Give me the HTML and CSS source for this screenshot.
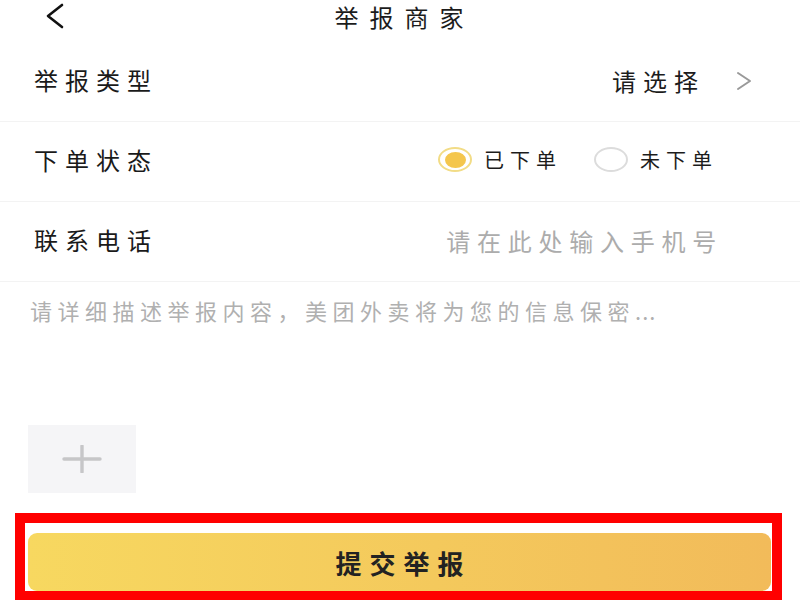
FILE: index.html
```html
<!DOCTYPE html>
<html lang="zh-CN">
<head>
<meta charset="utf-8">
<title>举报商家</title>
<link rel="stylesheet" href="styles.css">
</head>
<body>
<div class="page">
  <header class="header">
    <span class="back">
      <svg width="20" height="26" viewBox="0 0 20 26"><polyline points="17,2 3,13 17,24" fill="none" stroke="#111" stroke-width="2.6" stroke-linecap="round" stroke-linejoin="round"/></svg>
    </span>
    <h1 class="title">举报商家</h1>
  </header>

  <div class="row">
    <span class="label">举报类型</span>
    <span class="select">
      <span class="select-text">请选择</span>
      <svg class="chev" width="16" height="20" viewBox="0 0 16 20"><polyline points="2,2 14,10 2,18" fill="none" stroke="#999" stroke-width="2" stroke-linecap="round" stroke-linejoin="round"/></svg>
    </span>
  </div>

  <div class="row">
    <span class="label">下单状态</span>
    <span class="radios">
      <span class="radio">
        <span class="dot dot-on"><span class="dot-inner"></span></span>
        <span class="radio-text">已下单</span>
      </span>
      <span class="radio">
        <span class="dot dot-off"></span>
        <span class="radio-text">未下单</span>
      </span>
    </span>
  </div>

  <div class="row">
    <span class="label">联系电话</span>
    <span class="phone">请在此处输入手机号</span>
  </div>

  <div class="desc">
    <p class="desc-text">请详细描述举报内容，美团外卖将为您的信息保密<span class="dots">...</span></p>
    <div class="upload">
      <svg width="40" height="28" viewBox="0 0 40 28"><path d="M2 14H38M20 1V27" stroke="#c6c6c8" stroke-width="3.4" stroke-linecap="round"/></svg>
    </div>
  </div>

  <div class="submit-wrap">
    <div class="submit">提交举报</div>
  </div>
</div>
</body>
</html>
```

FILE: styles.css
```css
* { box-sizing: border-box; }
html, body { margin: 0; padding: 0; background: #fff; }
body {
  font-family: "Noto Sans CJK SC", "Noto Sans", sans-serif;
  color: #1c1c1c;
  overflow: hidden;
  height: 600px;
}
.page { width: 800px; }

.header {
  height: 42px;
  display: flex;
  align-items: flex-start;
  padding-left: 45px;
}
.back { display: flex; padding-top: 3px; }
.title {
  margin: 0;
  flex: 1;
  text-align: center;
  font-size: 24px;
  font-weight: 400;
  line-height: 34px;
  letter-spacing: 11px;
  padding-right: 56px;
}

.row {
  height: 80px;
  border-bottom: 1px solid #f3f3f3;
  display: flex;
  align-items: center;
  justify-content: space-between;
  padding: 0 48px 0 34px;
}
.label {
  font-size: 24px;
  letter-spacing: 7px;
  line-height: 30px;
  margin-top: -3px;
  color: #1a1a1a;
}
.select { display: flex; align-items: center; margin-top: -2px; }
.select-text { font-size: 24px; letter-spacing: 7px; margin-right: 31px; }
.chev { display: block; }

.radios { display: flex; align-items: center; margin-right: 34px; margin-top: -4px; }
.radio { display: flex; align-items: center; }
.radio + .radio { margin-left: 32px; }
.dot {
  width: 34px;
  height: 25px;
  border-radius: 50%;
  display: flex;
  align-items: center;
  justify-content: center;
}
.dot-on { border: 2px solid #f2dc86; }
.dot-inner { width: 21px; height: 16px; border-radius: 50%; background: #f4c64d; }
.dot-off { border: 2px solid #dcdcdc; }
.radio-text { font-size: 20px; letter-spacing: 6px; margin-left: 12px; }

.phone { font-size: 24px; color: #acacac; letter-spacing: 6.75px; margin-right: 29px; margin-top: -2px; }

.desc { padding: 14px 0 0 28px; }
.desc-text {
  margin: 0 0 0 2px;
  font-size: 22px;
  line-height: 28px;
  color: #b0b0b0;
  letter-spacing: 5.5px;
}
.dots { letter-spacing: 1px; }
.upload {
  margin-top: 101px;
  width: 108px;
  height: 68px;
  background: #f5f5f7;
  display: flex;
  align-items: center;
  justify-content: center;
}

.submit-wrap {
  margin: 20px 0 0 15px;
  width: 767px;
  border: 10px solid #ff0000;
  padding: 10px 1px 0 3px;
}
.submit {
  height: 58px;
  border-radius: 9px;
  background: linear-gradient(90deg, #f7d860 0%, #f4c95c 55%, #f2bb5a 100%);
  display: flex;
  align-items: center;
  justify-content: center;
  font-size: 26px;
  font-weight: 700;
  letter-spacing: 8px;
  padding-left: 8px;
  color: #222;
}
```
